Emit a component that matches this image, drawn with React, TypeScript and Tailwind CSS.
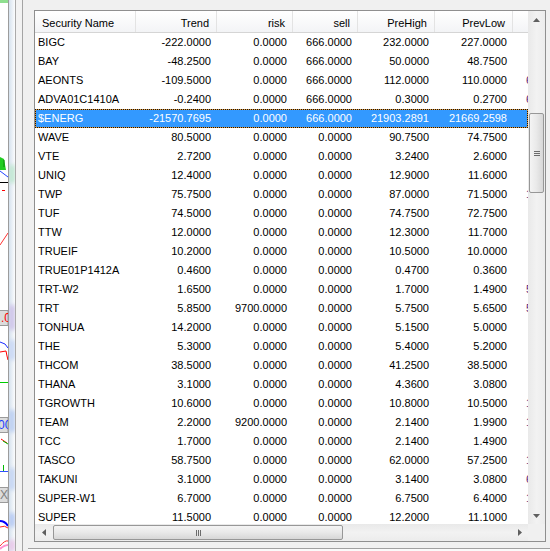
import React from "react"

type Row = [string, string, string, string, string, string, string]

const rows: Row[] = [
  ["BIGC", "-222.0000", "0.0000", "666.0000", "232.0000", "227.0000", ""],
  ["BAY", "-48.2500", "0.0000", "666.0000", "50.0000", "48.7500", ""],
  ["AEONTS", "-109.5000", "0.0000", "666.0000", "112.0000", "110.0000", "6"],
  ["ADVA01C1410A", "-0.2400", "0.0000", "666.0000", "0.3000", "0.2700", "6"],
  ["$ENERG", "-21570.7695", "0.0000", "666.0000", "21903.2891", "21669.2598", ""],
  ["WAVE", "80.5000", "0.0000", "0.0000", "90.7500", "74.7500", ""],
  ["VTE", "2.7200", "0.0000", "0.0000", "3.2400", "2.6000", ""],
  ["UNIQ", "12.4000", "0.0000", "0.0000", "12.9000", "11.6000", ""],
  ["TWP", "75.7500", "0.0000", "0.0000", "87.0000", "71.5000", "1"],
  ["TUF", "74.5000", "0.0000", "0.0000", "74.7500", "72.7500", ""],
  ["TTW", "12.0000", "0.0000", "0.0000", "12.3000", "11.7000", ""],
  ["TRUEIF", "10.2000", "0.0000", "0.0000", "10.5000", "10.0000", ""],
  ["TRUE01P1412A", "0.4600", "0.0000", "0.0000", "0.4700", "0.3600", ""],
  ["TRT-W2", "1.6500", "0.0000", "0.0000", "1.7000", "1.4900", "5"],
  ["TRT", "5.8500", "9700.0000", "0.0000", "5.7500", "5.6500", "5"],
  ["TONHUA", "14.2000", "0.0000", "0.0000", "5.1500", "5.0000", ""],
  ["THE", "5.3000", "0.0000", "0.0000", "5.4000", "5.2000", ""],
  ["THCOM", "38.5000", "0.0000", "0.0000", "41.2500", "38.5000", ""],
  ["THANA", "3.1000", "0.0000", "0.0000", "4.3600", "3.0800", ""],
  ["TGROWTH", "10.6000", "0.0000", "0.0000", "10.8000", "10.5000", "1"],
  ["TEAM", "2.2000", "9200.0000", "0.0000", "2.1400", "1.9900", "1"],
  ["TCC", "1.7000", "0.0000", "0.0000", "2.1400", "1.4900", ""],
  ["TASCO", "58.7500", "0.0000", "0.0000", "62.0000", "57.2500", "1"],
  ["TAKUNI", "3.1000", "0.0000", "0.0000", "3.1400", "3.0800", "6"],
  ["SUPER-W1", "6.7000", "0.0000", "0.0000", "6.7500", "6.4000", "1"],
  ["SUPER", "11.5000", "0.0000", "0.0000", "12.2000", "11.1000", ""],
]

const numW = ["w-[81px]", "w-[76px]", "w-[65px]", "w-[77px]", "w-[78px]"]
const heads = ["Trend", "risk", "sell", "PreHigh", "PrevLow"]

function ChartStrip() {
  return (
    <div className="w-[8px] h-full bg-white shrink-0">
      <svg width="8" height="551" viewBox="0 0 8 551">
        <rect x="0" y="0" width="8" height="3" fill="#8fdf8f" />
        <polygon points="0,157 4,159 6,170 0,170" fill="#22cc22" />
        <line x1="4" y1="160" x2="4" y2="167" stroke="#0a8a0a" />
        <line x1="0" y1="171" x2="8" y2="177" stroke="#2244ff" />
        <line x1="0" y1="182.5" x2="8" y2="182.5" stroke="#000" />
        <line x1="2" y1="190.5" x2="5" y2="190.5" stroke="#ff0000" />
        <line x1="8" y1="233" x2="0" y2="245" stroke="#ff3030" />
        <rect x="-1" y="310.5" width="9" height="15" fill="#dcdcdc" stroke="#9a9a9a" />
        <text x="1" y="322" fontSize="12" fill="#ff0000" fontFamily="Liberation Sans, sans-serif">.0</text>
        <polyline points="0,342 5,344 8,348" fill="none" stroke="#1a2cff" />
        <polyline points="0,352 6,351 7,356 8,360" fill="none" stroke="#ff0000" />
        <line x1="0" y1="382.5" x2="8" y2="382.5" stroke="#00cc00" />
        <rect x="-1" y="417.5" width="9" height="15" fill="#dcdcdc" stroke="#9a9a9a" />
        <text x="-2" y="429" fontSize="12" fill="#1a3cff" fontFamily="Liberation Sans, sans-serif">00</text>
        <line x1="1" y1="439" x2="7" y2="443" stroke="#ff0000" />
        <line x1="3" y1="441" x2="8" y2="444" stroke="#00bb00" />
        <line x1="3.5" y1="465" x2="3.5" y2="471" stroke="#00bb00" />
        <line x1="0" y1="471.5" x2="8" y2="471.5" stroke="#3050ff" />
        <rect x="-1" y="487.5" width="9" height="15" fill="#dcdcdc" stroke="#9a9a9a" />
        <text x="0" y="499" fontSize="12" fill="#808080" fontFamily="Liberation Sans, sans-serif">X</text>
        <path d="M0 521 Q5 521 8 526" fill="none" stroke="#0000ff" strokeWidth="2" />
        <path d="M0 527 Q5 525 8 528" fill="none" stroke="#ff2020" />
        <path d="M0 546 Q5 540 8 541" fill="none" stroke="#ff3030" />
        <path d="M0 549 Q4 545 8 545" fill="none" stroke="#ff90d0" strokeWidth="2" />
      </svg>
    </div>
  )
}

function Splitter() {
  return (
    <div className="relative w-[6px] h-full shrink-0 bg-gradient-to-r from-[#d6e2ee] to-[#fbfcfd] overflow-hidden">
      <div className="absolute left-0 top-[165px] w-[6px] h-[18px] bg-[#bfe6d0] blur-[2px]" />
      <div className="absolute left-0 top-[305px] w-[6px] h-[25px] bg-[#cdc2e8] blur-[2px]" />
      <div className="absolute left-0 top-[340px] w-[6px] h-[20px] bg-[#c8d6f4] blur-[2px]" />
      <div className="absolute left-0 top-[410px] w-[6px] h-[22px] bg-[#b9cdf0] blur-[2px]" />
      <div className="absolute left-0 top-[468px] w-[6px] h-[22px] bg-[#c3d4f2] blur-[2px]" />
      <div className="absolute left-0 top-[513px] w-[6px] h-[14px] bg-[#b4c8f2] blur-[2px]" />
      <div className="absolute left-0 top-[540px] w-[6px] h-[11px] bg-[#e8c6e8] blur-[2px]" />
    </div>
  )
}

function UpArrow() {
  return (
    <svg width="7" height="4" viewBox="0 0 7 4">
      <polygon points="3.5,0 7,4 0,4" fill="#5f5f5f" />
    </svg>
  )
}

function DownArrow() {
  return (
    <svg width="7" height="4" viewBox="0 0 7 4">
      <polygon points="0,0 7,0 3.5,4" fill="#5f5f5f" />
    </svg>
  )
}

function LeftArrow() {
  return (
    <svg width="4" height="7" viewBox="0 0 4 7">
      <polygon points="4,0 4,7 0,3.5" fill="#5f5f5f" />
    </svg>
  )
}

function RightArrow() {
  return (
    <svg width="4" height="7" viewBox="0 0 4 7">
      <polygon points="0,0 4,3.5 0,7" fill="#5f5f5f" />
    </svg>
  )
}

function VScroll() {
  return (
    <div className="w-[17px] h-full flex flex-col bg-gradient-to-r from-[#e9e9e9] via-[#f2f2f2] to-[#ececec] shrink-0">
      <div className="h-[17px] flex items-center justify-center">
        <UpArrow />
      </div>
      <div className="mt-[85px] mx-auto w-[15px] h-[80px] rounded-[2px] border border-[#979797] bg-gradient-to-r from-[#f4f4f4] via-[#e9e9e9] to-[#d7d7d7] flex flex-col items-center justify-center gap-[1px]">
        <div className="w-[6px] h-[1px] bg-[#6c6c6c]" />
        <div className="w-[6px] h-[1px] bg-[#6c6c6c]" />
        <div className="w-[6px] h-[1px] bg-[#6c6c6c]" />
      </div>
      <div className="flex-1" />
      <div className="h-[17px] flex items-center justify-center">
        <DownArrow />
      </div>
    </div>
  )
}

function HScroll() {
  return (
    <div className="h-[17px] flex shrink-0">
      <div className="flex-1 flex items-center bg-gradient-to-b from-[#e9e9e9] via-[#f2f2f2] to-[#ececec]">
        <div className="w-[17px] h-[17px] flex items-center justify-center">
          <LeftArrow />
        </div>
        <div className="ml-[1px] w-[290px] h-[15px] rounded-[2px] border border-[#979797] bg-gradient-to-b from-[#f4f4f4] via-[#e9e9e9] to-[#d7d7d7] flex items-center justify-center gap-[1px]">
          <div className="w-[1px] h-[6px] bg-[#6c6c6c]" />
          <div className="w-[1px] h-[6px] bg-[#6c6c6c]" />
          <div className="w-[1px] h-[6px] bg-[#6c6c6c]" />
        </div>
        <div className="flex-1" />
        <div className="w-[17px] h-[17px] flex items-center justify-center">
          <RightArrow />
        </div>
      </div>
      <div className="w-[17px] h-[17px] bg-[#f0f0f0]" />
    </div>
  )
}

function GridRow({ r, selected }: { r: Row; selected: boolean }) {
  return (
    <div
      className={`relative flex h-[19px] leading-[19px] shrink-0 ${
        selected ? "bg-[#3399ff] text-white" : "text-black"
      }`}
    >
      {selected && (
        <>
          <div className="absolute inset-0 border border-[#e39a3a]" />
          <div className="absolute inset-0 border border-dotted border-[#141414]" />
        </>
      )}
      <div className="w-[101px] pl-[3px] whitespace-nowrap overflow-hidden">{r[0]}</div>
      {numW.map((w, i) => (
        <div key={i} className={`${w} pr-[6px] text-right whitespace-nowrap overflow-hidden`}>
          {r[i + 1]}
        </div>
      ))}
      <div className="w-[15px] pl-[13px] whitespace-nowrap overflow-hidden text-[#5a2478]">
        {r[6] ? r[6] + "66.0000" : ""}
      </div>
    </div>
  )
}

export default function App() {
  return (
    <div
      className="w-[550px] h-[551px] flex overflow-hidden bg-[#f0f0f0] text-[11px]"
      style={{ fontFamily: '"Liberation Sans", Arial, sans-serif' }}
    >
      <ChartStrip />
      <div className="w-[1px] h-full bg-[#9c9c9c] shrink-0" />
      <Splitter />
      <div className="w-[1px] h-full bg-[#aaaaaa] shrink-0" />
      <div className="w-[6px] h-full bg-[#f2f2f2] shrink-0" />
      <div className="w-[1px] h-full bg-[#a4a4a4] shrink-0" />

      <div className="flex-1 flex flex-col">
        <div className="pl-[11px] pt-[10px]">
          <div className="w-[512px] h-[532px] border border-[#8f8f8f] bg-white flex flex-col">
            <div className="flex-1 flex overflow-hidden">
              <div className="w-[493px] flex flex-col overflow-hidden">
                <div className="flex h-[22px] shrink-0 border-b border-[#d5d5d5] bg-gradient-to-b from-white to-[#f3f4f6] text-black">
                  <div className="w-[101px] pl-[7px] pt-[2px] leading-[20px] border-r border-[#e3e3e3] whitespace-nowrap">
                    Security Name
                  </div>
                  {heads.map((h, i) => (
                    <div
                      key={h}
                      className={`${numW[i]} pr-[7px] pt-[2px] leading-[20px] text-right border-r border-[#e3e3e3] whitespace-nowrap`}
                    >
                      {h}
                    </div>
                  ))}
                  <div className="w-[15px]" />
                </div>
                {rows.map((r, i) => (
                  <GridRow key={r[0]} r={r} selected={i === 4} />
                ))}
              </div>
              <VScroll />
            </div>
            <HScroll />
          </div>
        </div>
        <div className="mt-[6px] ml-[5px] flex-1 border-t border-[#a0a0a0] bg-[#fafafa]" />
      </div>
    </div>
  )
}
